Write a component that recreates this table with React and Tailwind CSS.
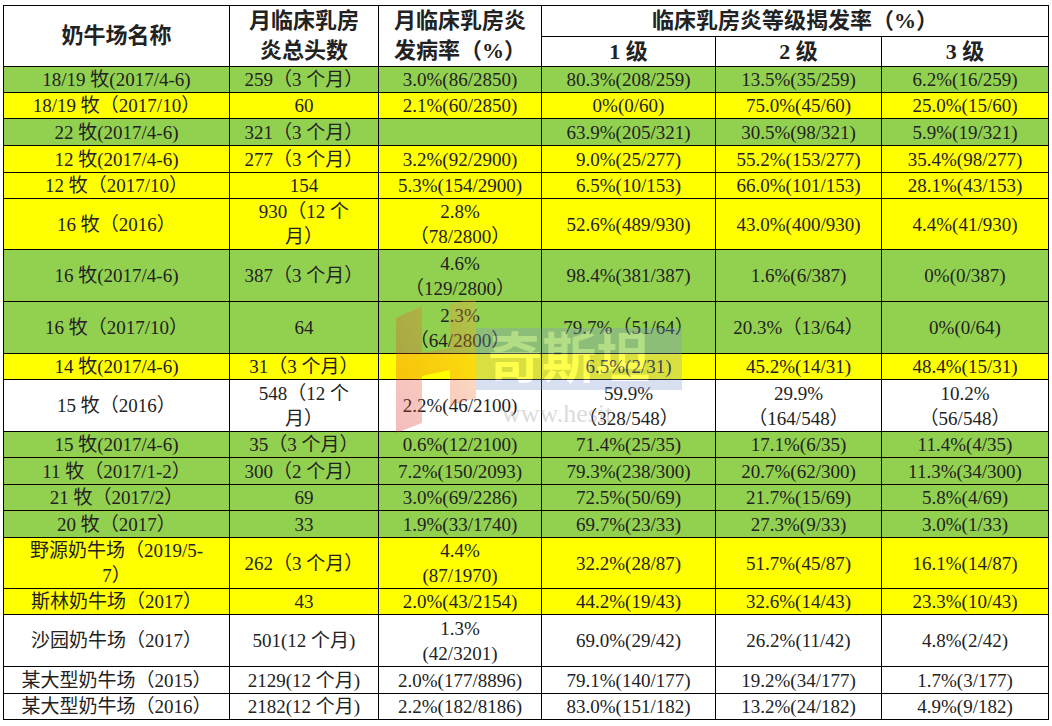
import React from "react";

const GREEN = "bg-[#92d050]";
const YELLOW = "bg-[#ffff00]";
const WHITE = "bg-white";

// [bg, height, name, total, rate, g1, g2, g3]
const rows = [
  [GREEN, 26, "18/19 牧(2017/4-6)", "259（3 个月）", "3.0%(86/2850)", "80.3%(208/259)", "13.5%(35/259)", "6.2%(16/259)"],
  [YELLOW, 26, "18/19 牧（2017/10）", "60", "2.1%(60/2850)", "0%(0/60)", "75.0%(45/60)", "25.0%(15/60)"],
  [GREEN, 27, "22 牧(2017/4-6)", "321（3 个月）", "", "63.9%(205/321)", "30.5%(98/321)", "5.9%(19/321)"],
  [YELLOW, 27, "12 牧(2017/4-6)", "277（3 个月）", "3.2%(92/2900)", "9.0%(25/277)", "55.2%(153/277)", "35.4%(98/277)"],
  [YELLOW, 26, "12 牧（2017/10）", "154", "5.3%(154/2900)", "6.5%(10/153)", "66.0%(101/153)", "28.1%(43/153)"],
  [YELLOW, 51, "16 牧（2016）", ["930（12 个", "月）"], ["2.8%", "（78/2800）"], "52.6%(489/930)", "43.0%(400/930)", "4.4%(41/930)"],
  [GREEN, 52, "16 牧(2017/4-6)", "387（3 个月）", ["4.6%", "（129/2800）"], "98.4%(381/387)", "1.6%(6/387)", "0%(0/387)"],
  [GREEN, 52, "16 牧（2017/10）", "64", ["2.3%", "（64/2800）"], "79.7%（51/64）", "20.3%（13/64）", "0%(0/64)"],
  [YELLOW, 26, "14 牧(2017/4-6)", "31（3 个月）", "", "6.5%(2/31)", "45.2%(14/31)", "48.4%(15/31)"],
  [WHITE, 52, "15 牧（2016）", ["548（12 个", "月）"], "2.2%(46/2100)", ["59.9%", "（328/548）"], ["29.9%", "（164/548）"], ["10.2%", "（56/548）"]],
  [GREEN, 26, "15 牧(2017/4-6)", "35（3 个月）", "0.6%(12/2100)", "71.4%(25/35)", "17.1%(6/35)", "11.4%(4/35)"],
  [GREEN, 27, "11 牧（2017/1-2）", "300（2 个月）", "7.2%(150/2093)", "79.3%(238/300)", "20.7%(62/300)", "11.3%(34/300)"],
  [GREEN, 26, "21 牧（2017/2）", "69", "3.0%(69/2286)", "72.5%(50/69)", "21.7%(15/69)", "5.8%(4/69)"],
  [GREEN, 27, "20 牧（2017）", "33", "1.9%(33/1740)", "69.7%(23/33)", "27.3%(9/33)", "3.0%(1/33)"],
  [YELLOW, 51, ["野源奶牛场（2019/5-", "7）"], "262（3 个月）", ["4.4%", "(87/1970)"], "32.2%(28/87)", "51.7%(45/87)", "16.1%(14/87)"],
  [YELLOW, 26, "斯林奶牛场（2017）", "43", "2.0%(43/2154)", "44.2%(19/43)", "32.6%(14/43)", "23.3%(10/43)"],
  [WHITE, 52, "沙园奶牛场（2017）", "501(12 个月)", ["1.3%", "(42/3201)"], "69.0%(29/42)", "26.2%(11/42)", "4.8%(2/42)"],
  [WHITE, 27, "某大型奶牛场（2015）", "2129(12 个月)", "2.0%(177/8896)", "79.1%(140/177)", "19.2%(34/177)", "1.7%(3/177)"],
  [WHITE, 26, "某大型奶牛场（2016）", "2182(12 个月)", "2.2%(182/8186)", "83.0%(151/182)", "13.2%(24/182)", "4.9%(9/182)"],
];

const Cell = ({ value, h }) => {
  const lines = Array.isArray(value) ? value : [value];
  return (
    <td className="border border-black p-0 text-center align-middle whitespace-nowrap">
      <div className="flex flex-col justify-center overflow-visible" style={{ height: h - 1 }}>
        {lines.map((l, k) => (
          <div key={k} className="h-[25px] leading-[25px]">
            {l}
          </div>
        ))}
      </div>
    </td>
  );
};

const Watermark = () => (
  <div className="absolute left-[392px] top-[298px] w-[300px] h-[135px] pointer-events-none opacity-30">
    <svg width="300" height="135" viewBox="0 0 300 135">
      <defs>
        <linearGradient id="hg" x1="0" y1="1" x2="1" y2="0">
          <stop offset="0" stopColor="#d8262a" />
          <stop offset="0.55" stopColor="#ee6a2c" />
          <stop offset="1" stopColor="#f6b838" />
        </linearGradient>
      </defs>
      <rect x="80" y="30" width="210" height="62" fill="#7f98d0" />
      <path d="M4 20 L30 8 L30 55 L58 50 L58 6 L84 0 L84 100 L58 108 L58 72 L30 78 L30 125 L4 135 Z" fill="url(#hg)" />
      <text x="96" y="80" fontSize="54" fontWeight="bold" fill="#ffffff" fontFamily="'Noto Sans CJK SC', sans-serif">
        奇斯坦
      </text>
      <text x="110" y="124" fontSize="26" fill="#8a8a8a" fontFamily="'Liberation Serif', serif">
        www.hesit
      </text>
    </svg>
  </div>
);

const Th = ({ children, ...rest }) => (
  <th className="border border-black p-0 bg-white font-bold" {...rest}>
    {children}
  </th>
);

export default function App() {
  return (
    <div className="relative w-[1052px] h-[726px] bg-white pt-[5px] pl-[3px] overflow-hidden">
      <table
        className="border-collapse text-[19px] text-[#222]"
        style={{ fontFamily: "'Liberation Serif', 'Noto Sans CJK SC', serif" }}
      >
        <colgroup>
          <col className="w-[226px]" />
          <col className="w-[149px]" />
          <col className="w-[163px]" />
          <col className="w-[174px]" />
          <col className="w-[166px]" />
          <col className="w-[167px]" />
        </colgroup>
        <thead className="text-[22px] leading-[30px]">
          <tr>
            <Th rowSpan={2}>奶牛场名称</Th>
            <Th rowSpan={2}>
              <div className="h-[60px] flex flex-col justify-center">
                <div className="h-[30px]">月临床乳房</div>
                <div className="h-[30px]">炎总头数</div>
              </div>
            </Th>
            <Th rowSpan={2}>
              <div className="h-[60px] flex flex-col justify-center">
                <div className="h-[30px]">月临床乳房炎</div>
                <div className="h-[30px]">发病率（%）</div>
              </div>
            </Th>
            <Th colSpan={3}>
              <div className="h-[30px]">临床乳房炎等级揭发率（%）</div>
            </Th>
          </tr>
          <tr>
            <Th>
              <div className="h-[29px]">1 级</div>
            </Th>
            <Th>
              <div className="h-[29px]">2 级</div>
            </Th>
            <Th>
              <div className="h-[29px]">3 级</div>
            </Th>
          </tr>
        </thead>
        <tbody>
          {rows.map(([bg, h, ...cells], i) => (
            <tr key={i} className={bg}>
              {cells.map((c, j) => (
                <Cell key={j} value={c} h={h} />
              ))}
            </tr>
          ))}
        </tbody>
      </table>
      <Watermark />
    </div>
  );
}
